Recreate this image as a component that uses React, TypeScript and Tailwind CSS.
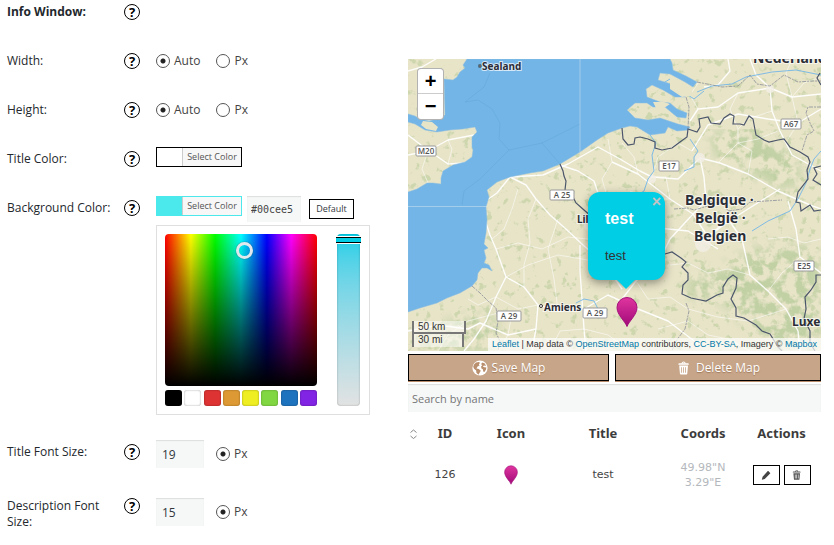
import { useState } from 'react';

const hueGradient =
  'bg-[linear-gradient(to_top,#000,transparent),linear-gradient(to_right,#f00,#ff0_17%,#0f0_33%,#0ff_50%,#00f_67%,#f0f_83%,#f00)]';

const palette = [
  { name: 'Black', color: 'bg-black' },
  { name: 'White', color: 'bg-white' },
  { name: 'Red', color: 'bg-[#dd3333]' },
  { name: 'Orange', color: 'bg-[#dd9933]' },
  { name: 'Yellow', color: 'bg-[#eeee22]' },
  { name: 'Green', color: 'bg-[#81d742]' },
  { name: 'Blue', color: 'bg-[#1e73be]' },
  { name: 'Purple', color: 'bg-[#8224e3]' },
];

const seaPath =
  'M59 0L55 6 57 9 52 13 49 18 45 21 36 20 37 56 29 60 21 62 12 60 7 57 0 55V63L7 65 17 71 29 73 42 71 55 70 67 68 69 73 64 78 64 88 65 91 64 98 57 103 45 106 35 112 33 119 33 125 25 124 19 124 9 130 0 133V253L12 249 29 244 39 239 52 234 64 227 69 221 70 214 74 209 79 209 84 212 81 206 76 204 78 199 76 191 80 189 76 185 78 174 79 161 78 148 81 138 79 131 89 123 102 118 122 114 135 112 152 105 172 93 189 81 200 74 214 69 222 67 229 68 242 76 257 74 260 68 269 72 280 71 282 68 270 65 252 59 240 61 227 59 219 51 227 44 239 44 245 48 257 48 269 58 278 59 279 54 269 50 262 44 252 43 239 38 238 30 244 26 255 31 267 38 277 38 279 33 260 24 250 21 252 14 262 15 277 23 285 28 289 23 278 17 265 11 264 4 262 0Z';

const motorways = [
  'M79 141L89 134 102 118 118 126 128 140 142 156 158 170 175 186 196 204 214 230',
  'M102 118L135 116 160 105 190 88 212 100 232 112 244 118 270 120 292 99',
  'M76 158L82 176 88 190 98 218 88 238 78 262 66 280 56 292',
  'M98 218L116 228 130 246 150 252 176 250 200 236 230 250 260 262 290 285',
  'M130 246L128 270 124 292',
  'M152 106L170 112 186 122 190 134 206 160 240 168 280 172 310 190',
  'M204 103L230 115 262 140 285 155 300 178 318 164 340 150 372 130',
  'M292 99L296 118 298 142 285 155',
  'M292 99L312 104 340 115 370 132 402 146 413 150',
  'M282 62L290 50 310 48 330 34 362 29 384 38 413 35',
  'M284 92L300 66 330 55 360 60 390 64 413 50',
  'M362 29L364 52 372 72 384 96 413 112',
  'M380 142L388 170 392 198 413 214',
  'M300 178L320 160 334 180 342 216 360 232 378 250 390 272 392 292',
  'M285 155L262 180 250 204 228 222 214 240',
  'M0 76L17 89 40 105 57 104',
  'M0 96L20 92 40 81 66 76',
  'M0 12L14 8 28 0',
  'M320 0L322 12 310 26 296 28',
  'M342 0L348 16 362 29',
  'M172 186L172 212 174 240 176 270 178 292',
  'M0 272L30 266 60 270 72 264 100 276 128 270',
];

const minorRoads = [
  'M88 190L110 184 134 190 160 178 180 180',
  'M110 130L104 150 96 170 84 180',
  'M98 218L120 206 150 196 174 200 196 204',
  'M128 140L120 160 122 184 116 206 116 228',
  'M150 160L140 190 146 220 150 252',
  'M60 240L70 246 88 238 110 250 130 246',
  'M200 80L204 103 194 120 206 160',
  'M230 115L226 98 214 84 M244 118L250 98 270 84 284 92',
  'M262 140L240 140 222 132 M262 140L258 118 244 118',
  'M310 104L330 84 350 80 370 72 M340 115L344 92 330 84',
  'M330 34L322 50 330 70 330 84 M364 52L340 60 330 70',
  'M384 38L396 24 413 18 M384 38L390 64 380 80',
  'M342 216L320 210 300 214 280 204 262 206',
  'M228 222L240 240 262 238 280 250 310 258 340 262 378 250',
  'M250 270L280 262 300 276 320 280 342 292',
  'M392 198L374 214 360 232 M413 180L396 184 380 178 360 180',
  'M30 292L40 276 60 262 90 254 M90 292L100 276 104 254',
  'M142 292L152 272 176 270 200 276 222 292',
  'M20 124L14 110 20 92 M40 105L44 90 40 81 M10 84L20 92',
  'M290 50L282 36 290 24 M384 0L378 14 384 38',
];

const borders = [
  'M214 69L215 80 220 86 226 85 227 79 232 78 240 80 247 83 247 89 254 91 264 89 272 83 279 78 280 70 289 73 292 68 291 60 300 58 303 64 312 65 316 59 322 55 326 57 325 65 332 65 336 66 341 57 345 60 348 76 356 81 361 83 370 81 376 80 382 88 392 93 400 98 402 103 399 111 400 120 390 133 388 143 392 144 393 152 402 146 406 152 413 151',
  'M152 105L155 112 156 117 158 122 157 131 163 134 168 144 176 151 184 158',
  'M257 195L264 193 273 199 278 203 274 208 280 214 280 221 275 226 274 235 283 239 298 242 309 236 315 234 315 228 320 220 325 216 329 219 328 229 323 240 328 249 328 257 336 259 348 266 354 272 362 275 370 288 374 292',
  'M413 216L408 216 408 223 403 231 397 238 398 250 396 260 402 272 402 284 407 292',
  'M412 14L409 19 413 26 M413 107L406 109 409 115 405 121 413 126',
];

const provinceBorders = [
  'M64 227L72 234 80 242 88 249 90 262 88 274 92 282 90 292',
  'M278 38L281 48 280 70',
  'M289 23L314 28 330 27 342 16 349 25 362 27 376 16 390 23 404 22 413 22',
  'M278 244L281 252 277 270 268 282 264 292',
  'M266 150L280 149 286 151 300 147 300 142 316 145 320 152 334 150 342 143 374 141',
  'M413 48L400 48 398 54 402 64 406 72 399 76 394 92',
];

const rivers = [
  'M242 76L248 84 244 96 246 112 240 120 236 132 224 140',
  'M282 80L286 86 290 92 286 98 286 108 276 112',
  'M289 33L304 27 324 25 338 18 364 13 388 11 413 16',
  'M413 92L406 100 402 110 398 124 390 140 382 152 360 162 344 172',
  'M252 26L262 20 274 32 286 40 296 32',
  'M168 244L176 240 186 242 190 250',
];

const shields = [
  { label: 'M20', x: 18, y: 92, w: 20 },
  { label: 'A 25', x: 154, y: 136, w: 24 },
  { label: 'E17', x: 261, y: 107, w: 20 },
  { label: 'A67', x: 383, y: 65, w: 20 },
  { label: 'E25', x: 396, y: 207, w: 20 },
  { label: 'A 29', x: 101, y: 257, w: 24 },
  { label: 'A 29', x: 187, y: 254, w: 24 },
];

const places = [
  { label: 'Sealand', x: 74, y: 11, size: 10 },
  { label: 'Lille', x: 169, y: 164, size: 10 },
  { label: 'Amiens', x: 136, y: 252, size: 10 },
  { label: 'Nederland', x: 345, y: 4, size: 14 },
  { label: 'Belgique ·', x: 277, y: 146, size: 14 },
  { label: 'België ·', x: 287, y: 164, size: 14 },
  { label: 'Belgien', x: 286, y: 182, size: 14 },
  { label: 'Luxe', x: 384, y: 267, size: 12 },
];

const GlobeIcon = () => (
  <svg aria-hidden="true" className="size-4" viewBox="0 0 20 20">
    <circle cx="10" cy="10" fill="#fff" r="9.5" />
    <path
      d="M2.500 5.500l2.500-2.500 3.500-.5 1.500 1-1.500 2 1 1.500-2.500 1-1.500 2.500 3 .6 2.500 2.400-1.500 2.500-1.500 2.500-2.500-2.500-.3-3L2.500 11 1.500 8.500zM13 3l3 1.500 1.500 3-2.500-.7-1.500 1.400 2 1 2.500.300-.5 2.500-2 3-1.500-.5-.4-3-1.800-1-.5-2.500 1.500-1.500-1.500-1.500z"
      fill="#b98f6e"
    />
  </svg>
);

const TrashIcon = ({ className }: { className: string }) => (
  <svg aria-hidden="true" className={className} fill="currentColor" viewBox="0 0 20 20">
    <path
      clipRule="evenodd"
      d="M12 4h3c.6 0 1 .4 1 1v1H3V5c0-.6.5-1 1-1h3c.2-1.100 1.300-2 2.500-2s2.300.9 2.500 2zM8 4h3c-.2-.6-.9-1-1.500-1S8.200 3.400 8 4zM4 7h11l-.9 10.100c0 .5-.5.900-1 .900H5.900c-.5 0-.900-.4-1-.900L4 7zm2.500 2v7h1V9zm2.500 0v7h1V9zm2.500 0v7h1V9z"
      fillRule="evenodd"
    />
  </svg>
);

const PencilIcon = () => (
  <svg aria-hidden="true" className="size-3" fill="currentColor" viewBox="0 0 20 20">
    <path d="M13.900 3.400l2.700 2.700c.5.500.6 1.100.3 1.500l-9 9L3 18l1.300-5 8.300-9.300c.3-.5.800-.7 1.300-.3z" />
  </svg>
);

const Pin = ({ className }: { className: string }) => (
  <svg aria-hidden="true" className={className} viewBox="0 0 22 30">
    <path
      d="M11 29.500C9 24 1 18 1 10.500a10 10 0 0 1 20 0C21 18 13 24 11 29.500z"
      fill="url(#pin)"
      stroke="#a3127c"
    />
    <defs>
      <linearGradient id="pin" x1="0" x2="0" y1="0" y2="1">
        <stop offset="0" stopColor="#e0359f" />
        <stop offset="1" stopColor="#a00a78" />
      </linearGradient>
    </defs>
  </svg>
);

const Help = ({ topic }: { topic: string }) => (
  <button
    aria-label={`Help: ${topic}`}
    className="flex size-4 items-center justify-center rounded-full border border-black font-['Noto_Sans',sans-serif] text-[13px] leading-none font-bold text-black"
    type="button"
  >
    ?
  </button>
);

const Radio = ({ name, label, checked }: { name: string; label: string; checked?: boolean }) => (
  <label className="flex items-center gap-1 text-xs text-[#444]">
    <input
      className="size-3.5 appearance-none rounded-full border border-[#555] bg-white checked:bg-[radial-gradient(circle,#222_2px,transparent_3px)]"
      defaultChecked={checked}
      name={name}
      type="radio"
    />
    {label}
  </label>
);

const SizeRow = ({ name }: { name: string }) => (
  <div className="flex h-6 items-center gap-4">
    <Radio checked label="Auto" name={name} />
    <Radio label="Px" name={name} />
  </div>
);

const row = 'grid grid-cols-[117px_32px_1fr] items-start';
const rowLabel = 'text-xs leading-6 text-[#23282d]';
const helpCell = 'flex h-6 items-center';

const SelectColor = ({ swatch, border }: { swatch: string; border: string }) => (
  <button className={`flex h-5 border text-[9px] leading-[18px] text-[#555] ${border}`} type="button">
    <span className={`w-[25px] self-stretch ${swatch}`} />
    <span className="w-[59px] border-l border-[#ccc] bg-[#f7f7f7] text-center">Select Color</span>
  </button>
);

const ColorPicker = () => (
  <div className="mt-[3px] flex h-[190px] w-[214px] gap-5 border border-[#dfdfdf] bg-white p-2">
    <div className="flex w-[152px] flex-col justify-between">
      <div className={`relative h-[152px] rounded-sm ${hueGradient}`}>
        <span className="absolute top-2 left-[71px] size-[17px] rounded-full border-[3px] border-[#dfe9ee] shadow-[0_0_1px_#333]" />
      </div>
      <div className="flex justify-between">
        {palette.map(({ name, color }) => (
          <button
            aria-label={name}
            className={`h-4 w-[17px] rounded-[3px] shadow-[inset_0_0_2px_rgba(0,0,0,0.4)] ${color}`}
            key={name}
            type="button"
          />
        ))}
      </div>
    </div>
    <div className="relative w-[23px] rounded-sm bg-linear-to-b from-[#00cfe8] to-[#e2e2e2] shadow-[inset_0_0_2px_rgba(0,0,0,0.3)]">
      <span className="absolute top-[2px] -left-[2px] h-2 w-[27px] border border-white bg-[#00cee5] shadow-[inset_0_1px_#000,inset_0_-1px_#000]" />
    </div>
  </div>
);

const Settings = () => (
  <form className="flex w-[370px] shrink-0 flex-col gap-[25px] pl-[7px]">
    <div className={row}>
      <h2 className={`${rowLabel} font-bold`}>Info Window:</h2>
      <div className={helpCell}>
        <Help topic="Info window" />
      </div>
    </div>
    <div className={row}>
      <p className={rowLabel}>Width:</p>
      <div className={helpCell}>
        <Help topic="Width" />
      </div>
      <SizeRow name="width" />
    </div>
    <div className={row}>
      <p className={rowLabel}>Height:</p>
      <div className={helpCell}>
        <Help topic="Height" />
      </div>
      <SizeRow name="height" />
    </div>
    <div className={`${row} h-6`}>
      <p className={rowLabel}>Title Color:</p>
      <div className={helpCell}>
        <Help topic="Title color" />
      </div>
      <div>
        <SelectColor border="border-black" swatch="bg-white" />
      </div>
    </div>
    <div className={row}>
      <label className={rowLabel} htmlFor="background-color">
        Background Color:
      </label>
      <div className={helpCell}>
        <Help topic="Background color" />
      </div>
      <div>
        <div className="flex items-start">
          <SelectColor border="border-[#4be8ec]" swatch="bg-[#4be8ec]" />
          <input
            className="ml-[5px] h-[26px] w-[54px] bg-[#f6f8f8] px-1 font-['DejaVu_Sans_Mono',monospace] text-[10px] text-[#444] shadow-[inset_0_1px_1px_#ddd]"
            defaultValue="#00cee5"
            id="background-color"
          />
          <button
            className="mt-[3px] ml-2 h-5 w-[45px] border border-black text-center text-[9px] leading-[18px] text-[#32373c]"
            type="button"
          >
            Default
          </button>
        </div>
        <ColorPicker />
      </div>
    </div>
    <div className={`${row} pb-[5px]`}>
      <label className={rowLabel} htmlFor="title-size">
        Title Font Size:
      </label>
      <div className={helpCell}>
        <Help topic="Title font size" />
      </div>
      <div className="flex items-center gap-3">
        <input
          className="h-7 w-12 bg-[#f6f8f8] px-1.5 text-xs text-[#32373c] shadow-[inset_0_1px_1px_#ddd]"
          defaultValue="19"
          id="title-size"
        />
        <Radio checked label="Px" name="title-unit" />
      </div>
    </div>
    <div className={row}>
      <label className="pr-4 text-xs leading-4 text-[#23282d]" htmlFor="description-size">
        Description Font Size:
      </label>
      <Help topic="Description font size" />
      <div className="flex items-center gap-3">
        <input
          className="h-7 w-12 bg-[#f6f8f8] px-1.5 text-xs text-[#32373c] shadow-[inset_0_1px_1px_#ddd]"
          defaultValue="15"
          id="description-size"
        />
        <Radio checked label="Px" name="description-unit" />
      </div>
    </div>
  </form>
);

const MapTiles = () => (
  <svg
    aria-label="Map of Belgium"
    className="block h-full w-full"
    preserveAspectRatio="xMidYMid slice"
    role="img"
    viewBox="0 0 413 292"
  >
    <defs>
      <filter colorInterpolationFilters="sRGB" height="100%" id="woods" width="100%" x="0" y="0">
        <feTurbulence baseFrequency="0.13" numOctaves="3" seed="8" type="fractalNoise" />
        <feColorMatrix values="0 0 0 0 0.76  0 0 0 0 0.82  0 0 0 0 0.64  8 0 0 0 -4.900" />
        <feComposite in2="SourceGraphic" operator="in" />
      </filter>
      <filter colorInterpolationFilters="sRGB" height="100%" id="forest" width="100%" x="0" y="0">
        <feGaussianBlur in="SourceGraphic" result="area" stdDeviation="7" />
        <feTurbulence baseFrequency="0.09" numOctaves="4" seed="3" type="fractalNoise" />
        <feColorMatrix values="0 0 0 0 0.74  0 0 0 0 0.81  0 0 0 0 0.63  5 0 0 0 -2.100" />
        <feComposite in2="area" operator="in" />
      </filter>
    </defs>
    <rect fill="#e8e4c8" height="292" width="413" />
    <rect fill="#000" filter="url(#woods)" height="292" opacity="0.7" width="413" />
    <path
      d="M276 222L320 206 346 190 380 184 413 190V292H370L340 266 312 240 280 238ZM300 74L350 70 384 96 396 124 370 130 340 112 310 100ZM40 262L90 256 84 292H10Z"
      fill="#000"
      filter="url(#forest)"
      opacity="0.9"
    />
    <g fill="none" stroke="#fff" strokeLinejoin="round">
      {minorRoads.map((d) => (
        <path d={d} key={d} opacity="0.65" strokeWidth="0.8" />
      ))}
      {motorways.map((d) => (
        <path d={d} key={d} opacity="0.9" strokeWidth="1.4" />
      ))}
    </g>
    <g fill="#f3efe6" opacity="0.8">
      <circle cx="292" cy="99" r="5" />
      <circle cx="295" cy="185" r="8" />
      <circle cx="362" cy="30" r="4" />
      <circle cx="244" cy="120" r="4" />
      <circle cx="182" cy="166" r="6" />
    </g>
    <g fill="none" stroke="#73b5e6" strokeWidth="0.9">
      {rivers.map((d) => (
        <path d={d} key={d} />
      ))}
    </g>
    <path d={seaPath} fill="#73b5e6" stroke="#8fbfe0" strokeWidth="0.5" />
    <path
      d="M15 62L24 63 30 68 28 72 18 70 13 66ZM245 43L256 43 262 45 256 49 248 49ZM262 19L276 26 288 36 274 38 262 30Z"
      fill="#e8e4c8"
    />
    <path
      d="M82 14L76 28 57 43 70 41 84 50 92 64 91 80 101 91 134 84 172 65M134 84L152 105M101 91L72 120 56 132 54 146"
      fill="none"
      stroke="#64a8db"
      strokeWidth="0.6"
    />
    <path d="M172 0V93M0 147.500H79" fill="none" opacity="0.5" stroke="#d6e6f2" />
    <g fill="none" stroke="#4c566b" strokeWidth="1.200">
      {borders.map((d) => (
        <path d={d} key={d} />
      ))}
    </g>
    <g fill="none" stroke="#8a8f98" strokeDasharray="4 1 2 1" strokeWidth="0.8">
      {provinceBorders.map((d) => (
        <path d={d} key={d} />
      ))}
    </g>
    <g fontFamily="Open Sans, sans-serif" fontSize="8" fontWeight="600" textAnchor="middle">
      {shields.map(({ label, x, y, w }) => (
        <g key={`${label}-${x}`}>
          <rect fill="#fff" height="10" rx="1" stroke="#999" width={w} x={x - w / 2} y={y - 5} />
          <text fill="#555" x={x} y={y + 3}>
            {label}
          </text>
        </g>
      ))}
    </g>
    <g fill="#fff" stroke="#333">
      <rect height="2" width="2" x="71" y="6" />
      <circle cx="133" cy="247" r="1.500" />
    </g>
    <g
      fill="#2b2d36"
      fontFamily="Noto Sans, sans-serif"
      fontWeight="700"
      paintOrder="stroke"
      stroke="#ffffffb0"
      strokeWidth="2"
    >
      {places.map(({ label, x, y, size }) => (
        <text fontSize={size} key={label} x={x} y={y}>
          {label}
        </text>
      ))}
    </g>
  </svg>
);

const link = 'text-[#0078a8]';

const MapView = () => {
  const [popupOpen, setPopupOpen] = useState(true);

  return (
    <div className="relative h-[292px] overflow-hidden bg-[#e8e4c8] font-['Liberation_Sans',Arial,sans-serif]">
      <MapTiles />
      <div className="absolute top-[9px] left-[9px] flex w-[27px] flex-col rounded-sm border border-black/30 bg-white text-xl leading-[25px] font-bold text-black">
        <button aria-label="Zoom in" className="h-[25px] border-b border-[#ccc]" type="button">
          +
        </button>
        <button aria-label="Zoom out" className="h-[25px]" type="button">
          −
        </button>
      </div>
      {popupOpen && (
        <div className="absolute top-[133px] left-[180px] h-[88px] w-[77px] rounded-xl bg-[#00cee5] px-[17px] pt-4 text-[#333] shadow-[0_3px_10px_rgba(0,0,0,0.4)]">
          <span className="absolute -bottom-[6px] left-[31px] size-3.5 rotate-45 bg-[#00cee5]" />
          <button
            aria-label="Close popup"
            className="absolute top-[2px] right-1 text-base leading-4 font-bold text-[#c3c3c3]"
            onClick={() => setPopupOpen(false)}
            type="button"
          >
            ×
          </button>
          <h3 className="text-base leading-[22px] font-bold text-white">test</h3>
          <p className="mt-4 text-[13px] leading-5">test</p>
        </div>
      )}
      <Pin className="absolute top-[238px] left-[208px] h-[30px] w-[22px]" />
      <div className="absolute bottom-1 left-1 text-[10px] leading-3 text-[#333]">
        <div className="h-[13px] w-[54px] border-x-2 border-b-2 border-[#777] bg-white/50 pl-1">50 km</div>
        <div className="h-[13px] w-[52px] border-x-2 border-[#777] bg-white/50 pl-1">30 mi</div>
      </div>
      <p className="absolute right-0 bottom-0 bg-white/70 px-1 text-[9px] leading-[13px] whitespace-nowrap text-[#333]">
        <a className={link} href="#leaflet">Leaflet</a> | Map data ©{' '}
        <a className={link} href="#osm">OpenStreetMap</a> contributors,{' '}
        <a className={link} href="#licence">CC-BY-SA</a>, Imagery ©{' '}
        <a className={link} href="#mapbox">Mapbox</a>
      </p>
    </div>
  );
};

const MarkerTable = () => (
  <table className="mt-[10px] w-full table-fixed text-center font-['DejaVu_Sans',Verdana,sans-serif] text-[11px] text-[#444]">
    <colgroup>
      <col className="w-3" />
      <col className="w-[50px]" />
      <col className="w-[82px]" />
      <col />
      <col className="w-[98px]" />
      <col className="w-[69px]" />
    </colgroup>
    <thead>
      <tr className="h-6 font-['Noto_Sans',sans-serif] text-[13px] text-[#3c3c3c]">
        <th>
          <button aria-label="Sort" className="block" type="button">
            <svg className="h-3 w-[11px]" fill="none" stroke="#888" viewBox="0 0 11 12">
              <path d="M2.500 4.500l3-2.500 3 2.500M2.500 8l3 2.500L8.500 8" />
            </svg>
          </button>
        </th>
        <th>ID</th>
        <th>Icon</th>
        <th>Title</th>
        <th>Coords</th>
        <th className="pr-2.5">Actions</th>
      </tr>
    </thead>
    <tbody>
      <tr className="h-[58px]">
        <td />
        <td>126</td>
        <td>
          <Pin className="mx-auto h-5 w-3.5" />
        </td>
        <td>test</td>
        <td className="text-[11px] leading-[15px] font-medium text-[#b4b8bd]">
          49.98"N
          <br />
          3.29"E
        </td>
        <td className="pr-2.5">
          <div className="flex justify-center gap-1">
            <button
              aria-label="Edit marker"
              className="flex h-5 w-[27px] shrink-0 items-center justify-center border border-black"
              type="button"
            >
              <PencilIcon />
            </button>
            <button
              aria-label="Delete marker"
              className="flex h-5 w-[27px] shrink-0 items-center justify-center border border-black text-[#555]"
              type="button"
            >
              <TrashIcon className="size-3" />
            </button>
          </div>
        </td>
      </tr>
    </tbody>
  </table>
);

const actionButton =
  'flex h-[27px] items-center justify-center gap-1 border border-black bg-[#c7a589] text-xs text-white shadow-[0_1px_#b98d6a] [text-shadow:0_1px_1px_#a07a5a]';

export default function App() {
  return (
    <main className="flex gap-[38px] pr-[13px] font-['Open_Sans','Segoe_UI',sans-serif]">
      <Settings />
      <section className="min-w-0 flex-1 pt-[59px]">
        <MapView />
        <div className="mt-[3px] grid grid-cols-[201fr_206fr] gap-1.5">
          <button className={actionButton} type="button">
            <GlobeIcon />
            Save Map
          </button>
          <button className={actionButton} type="button">
            <TrashIcon className="size-4" />
            Delete Map
          </button>
        </div>
        <input
          aria-label="Search by name"
          className="mt-[3px] block h-7 w-full bg-[#f6f8f8] px-1 text-[11px] text-[#444] shadow-[inset_0_1px_1px_#ddd] placeholder:text-[#757575]"
          placeholder="Search by name"
          type="search"
        />
        <MarkerTable />
      </section>
    </main>
  );
}
